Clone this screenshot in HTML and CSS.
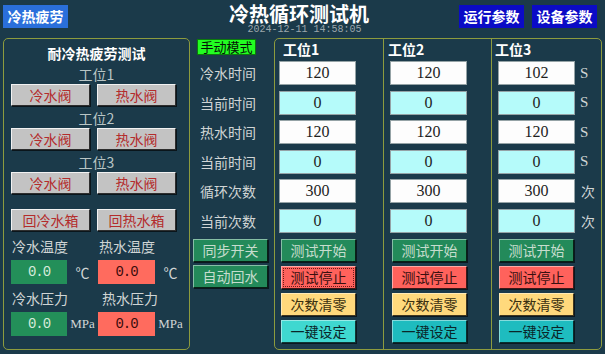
FILE: index.html
```html
<!DOCTYPE html>
<html lang="zh">
<head>
<meta charset="utf-8">
<title>冷热循环测试机</title>
<link rel="stylesheet" href="styles.css">
</head>
<body>
<div class="screen">
  <header class="top">
    <div class="top-left"><div class="btn-top btn-blue">冷热疲劳</div></div>
    <div class="title-block">
      <div class="title">冷热循环测试机</div>
      <div class="date">2024-12-11 14:58:05</div>
    </div>
    <div class="top-right">
      <div class="btn-top btn-navy">运行参数</div>
      <div class="btn-top btn-navy">设备参数</div>
    </div>
  </header>
  <main class="main">
    <section class="left-panel">
      <div class="lp-title">耐冷热疲劳测试</div>
      <div class="station">工位1</div>
      <div class="valve-row"><div class="btn-grey">冷水阀</div><div class="btn-grey">热水阀</div></div>
      <div class="station">工位2</div>
      <div class="valve-row"><div class="btn-grey">冷水阀</div><div class="btn-grey">热水阀</div></div>
      <div class="station">工位3</div>
      <div class="valve-row"><div class="btn-grey">冷水阀</div><div class="btn-grey">热水阀</div></div>
      <div class="valve-row tank-row"><div class="btn-grey">回冷水箱</div><div class="btn-grey">回热水箱</div></div>
      <div class="sensors">
        <div class="s-label">冷水温度</div>
        <div class="s-label">热水温度</div>
        <div class="s-row"><div class="val cold">0.0</div><div class="unit">℃</div></div>
        <div class="s-row"><div class="val hot">0.0</div><div class="unit">℃</div></div>
        <div class="s-label">冷水压力</div>
        <div class="s-label s-label-shift">热水压力</div>
        <div class="s-row"><div class="val cold">0.0</div><div class="unit unit-mpa">MPa</div></div>
        <div class="s-row"><div class="val hot">0.0</div><div class="unit unit-mpa">MPa</div></div>
      </div>
    </section>

    <section class="mid">
      <div class="mode">手动模式</div>
      <div class="mid-labels">
        <div class="mid-label">冷水时间</div>
        <div class="mid-label">当前时间</div>
        <div class="mid-label">热水时间</div>
        <div class="mid-label">当前时间</div>
        <div class="mid-label">循环次数</div>
        <div class="mid-label">当前次数</div>
      </div>
      <div class="mid-buttons">
        <div class="btn btn-green btn-mid">同步开关</div>
        <div class="btn btn-green btn-mid">自动回水</div>
      </div>
    </section>

    <section class="right-panel">
      <div class="col c1">
        <div class="col-head">工位1</div>
        <div class="boxes">
          <div class="box-row"><div class="box">120</div></div>
          <div class="box-row"><div class="box cyan">0</div></div>
          <div class="box-row"><div class="box">120</div></div>
          <div class="box-row"><div class="box cyan">0</div></div>
          <div class="box-row"><div class="box">300</div></div>
          <div class="box-row"><div class="box cyan">0</div></div>
        </div>
        <div class="col-buttons">
          <div class="btn btn-green">测试开始</div>
          <div class="btn btn-red focused">测试停止</div>
          <div class="btn btn-yellow">次数清零</div>
          <div class="btn btn-teal btn-teal-light">一键设定</div>
        </div>
      </div>
      <div class="col c2">
        <div class="col-head">工位2</div>
        <div class="boxes">
          <div class="box-row"><div class="box">120</div></div>
          <div class="box-row"><div class="box cyan">0</div></div>
          <div class="box-row"><div class="box">120</div></div>
          <div class="box-row"><div class="box cyan">0</div></div>
          <div class="box-row"><div class="box">300</div></div>
          <div class="box-row"><div class="box cyan">0</div></div>
        </div>
        <div class="col-buttons">
          <div class="btn btn-green">测试开始</div>
          <div class="btn btn-red">测试停止</div>
          <div class="btn btn-yellow">次数清零</div>
          <div class="btn btn-teal">一键设定</div>
        </div>
      </div>
      <div class="col c3">
        <div class="col-head">工位3</div>
        <div class="boxes">
          <div class="box-row"><div class="box">102</div><span class="r-unit">S</span></div>
          <div class="box-row"><div class="box cyan">0</div><span class="r-unit">S</span></div>
          <div class="box-row"><div class="box">120</div><span class="r-unit">S</span></div>
          <div class="box-row"><div class="box cyan">0</div><span class="r-unit">S</span></div>
          <div class="box-row"><div class="box">300</div><span class="r-unit r-unit-cjk">次</span></div>
          <div class="box-row"><div class="box cyan">0</div><span class="r-unit r-unit-cjk">次</span></div>
        </div>
        <div class="col-buttons">
          <div class="btn btn-green">测试开始</div>
          <div class="btn btn-red">测试停止</div>
          <div class="btn btn-yellow">次数清零</div>
          <div class="btn btn-teal">一键设定</div>
        </div>
      </div>
    </section>
  </main>
</div>
</body>
</html>
```

FILE: styles.css
```css
* { box-sizing: border-box; }

html, body {
  margin: 0;
  padding: 0;
}

body {
  background: #1b3a4a;
  width: 605px;
  height: 354px;
  overflow: hidden;
  font-family: "Noto Sans CJK SC", "Liberation Sans", sans-serif;
  color: #d2d6d6;
}

.screen {
  width: 605px;
  height: 354px;
}

/* ---------- header ---------- */
.top {
  display: grid;
  grid-template-columns: 1fr auto 1fr;
  height: 38px;
}

.top-left {
  padding: 5px 0 0 3px;
}

.top-right {
  display: flex;
  justify-content: flex-end;
  align-items: flex-start;
  gap: 8px;
  padding: 5px 8px 0 0;
}

.btn-top {
  width: 65px;
  height: 23px;
  font-size: 14px;
  font-weight: bold;
  line-height: 23px;
  color: #fff;
  text-align: center;
}

.btn-blue { background: #2a6fdb; }
.btn-navy { background: #0b0bc6; }

.title-block {
  text-align: center;
  padding-top: 3px;
}

.title {
  font-size: 20px;
  font-weight: bold;
  line-height: 21px;
  color: #ffffff;
  padding-right: 7px;
}

.date {
  font-family: "Liberation Mono", monospace;
  font-size: 10px;
  line-height: 12px;
  color: #9ca6ac;
  padding-left: 4px;
}

/* ---------- main ---------- */
.main {
  display: flex;
  padding-left: 3px;
  height: 312px;
}

/* ---------- left panel ---------- */
.left-panel {
  width: 187px;
  height: 312px;
  border: 1px solid #8d9b3e;
  border-radius: 5px;
  padding-top: 5px;
}

.lp-title {
  font-size: 14px;
  font-weight: bold;
  line-height: 18px;
  color: #ffffff;
  text-align: center;
  margin-bottom: 3px;
}

.station {
  font-size: 14px;
  line-height: 18px;
  color: #b9c5c5;
  text-align: center;
  margin-bottom: 1px;
}

.valve-row {
  display: flex;
  gap: 7px;
  padding-left: 7px;
  margin-bottom: 3px;
}

.tank-row {
  margin-top: 15px;
}

.btn-grey {
  width: 79px;
  height: 22px;
  background: #c3c3c3;
  color: #b42c2c;
  font-size: 14px;
  line-height: 20px;
  text-align: center;
  border: 1px solid;
  border-color: #f2f2f2 #2e2e2e #2e2e2e #f2f2f2;
  box-shadow: 1px 1px 0 #0a151b;
}

.sensors {
  display: grid;
  grid-template-columns: 87px 88px;
  grid-template-rows: 18px 24px 18px 24px;
  row-gap: 5px;
  padding-left: 7px;
  margin-top: 6px;
}

.s-label {
  font-size: 14px;
  line-height: 18px;
  padding-left: 1px;
  color: #d0d5d5;
}

.s-label-shift { padding-left: 4px; }

.s-row {
  display: flex;
  align-items: center;
}

.val {
  width: 56px;
  height: 24px;
  font-family: "Liberation Mono", monospace;
  font-size: 14px;
  letter-spacing: -1px;
  line-height: 24px;
  text-align: center;
}

.val.cold {
  background: #238f59;
  color: #d6eadb;
}

.val.hot {
  width: 57px;
  background: #ff6b5e;
  color: #3a0c0c;
}

.unit {
  flex: 1;
  text-align: center;
  font-family: "Liberation Serif", "Noto Sans CJK SC", serif;
  font-size: 14px;
  color: #d0d5d5;
}

.unit-mpa {
  font-size: 13px;
}

/* ---------- middle column ---------- */
.mid {
  width: 84px;
  display: flex;
  flex-direction: column;
}

.mode {
  margin: 1px 0 0 7px;
  width: 59px;
  height: 16px;
  background: #22fc22;
  box-shadow: inset 0 0 0 1px #0c7a0c;
  color: #061206;
  font-size: 13px;
  line-height: 16px;
  text-align: center;
  white-space: nowrap;
}

.mid-labels {
  display: flex;
  flex-direction: column;
  gap: 5.6px;
  margin-top: 6px;
}

.mid-label {
  height: 24px;
  line-height: 24px;
  padding-left: 10px;
  font-size: 14px;
  color: #d0d5d5;
}

.mid-buttons {
  display: flex;
  flex-direction: column;
  gap: 3px;
  margin-top: 6px;
  padding-left: 3px;
}

.btn-mid {
  width: 76px;
}

/* ---------- right panel ---------- */
.right-panel {
  width: 328px;
  height: 312px;
  border: 1px solid #8d9b3e;
  border-radius: 5px;
  display: flex;
}

.col {
  display: flex;
  flex-direction: column;
  padding-top: 2px;
}

.c1 { width: 109px; border-right: 1px solid #8d9b3e; padding-left: 4px; }
.c2 { width: 108px; border-right: 1px solid #8d9b3e; padding-left: 6px; }
.c3 { flex: 1; padding-left: 6px; }

.col-head {
  font-size: 14px;
  font-weight: bold;
  line-height: 16px;
  color: #ffffff;
  margin-bottom: 4px;
}

.c1 .col-head { padding-left: 4px; }
.c2 .col-head { margin-left: -2px; }
.c3 .col-head { margin-left: -3px; }

.boxes {
  display: flex;
  flex-direction: column;
  gap: 5.6px;
}

.box-row {
  display: flex;
  align-items: center;
  height: 24px;
}

.box {
  width: 77px;
  height: 24px;
  background: #fdfdfd;
  border: 1px solid #95a3a6;
  font-family: "Liberation Serif", serif;
  font-size: 16px;
  line-height: 22px;
  text-align: center;
  color: #1e1e1e;
}

.box.cyan {
  background: #b5fbfa;
}

.r-unit {
  margin-left: 5px;
  font-family: "Liberation Serif", serif;
  font-size: 15px;
  color: #d0d5d5;
}

.r-unit-cjk {
  font-family: "Noto Sans CJK SC", sans-serif;
  font-size: 14px;
  margin-left: 6px;
}

.col-buttons {
  display: flex;
  flex-direction: column;
  gap: 4px;
  margin-top: 6px;
}

.c1 .col-buttons { padding-left: 2px; }
.c2 .col-buttons { padding-left: 2px; }
.c3 .col-buttons { padding-left: 1px; }

.btn {
  width: 75px;
  height: 23px;
  font-size: 14px;
  line-height: 21px;
  text-align: center;
  border: 1px solid;
  border-color: rgba(255,255,255,0.45) rgba(0,0,0,0.75) rgba(0,0,0,0.75) rgba(255,255,255,0.45);
  box-shadow: 1px 1px 0 #0b1820;
}

.btn-green { background: #238a5a; color: #c6ddce; }
.btn-red { background: #ff625c; color: #3a1010; }
.btn-yellow { background: #ffd97c; color: #3a3010; }
.btn-teal { background: #1ebcbf; color: #0a2628; }
.btn-teal-light { background: #3fd8d0; }

.focused {
  outline: 1px dotted #6a1a1a;
  outline-offset: -3px;
}
```
